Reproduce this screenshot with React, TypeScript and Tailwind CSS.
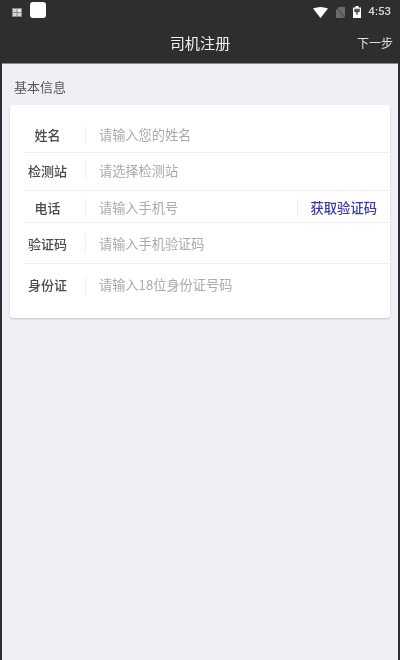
const font = "[font-family:'Noto_Sans_CJK_SC','Liberation_Sans',sans-serif]";

function Row({ label, hint, h, line = true, extra }: { label: string; hint: string; h: string; line?: boolean; extra?: boolean }) {
  return (
    <div className={`${h} flex items-center ml-[14px] ${line ? "border-b border-[#eeeeee]" : ""}`}>
      <div className="w-[47px] text-center text-[13px] font-medium text-[#4a4a4a]">{label}</div>
      <div className="ml-[14px] h-[17px] w-px bg-[#eeeeee]" />
      <div className="ml-[13px] flex-1 text-[13.2px] text-[#aaaaaa]">{hint}</div>
      {extra && (
        <div className="flex h-[17px] items-center border-l border-[#eeeeee] pl-[13px] pr-[13px] text-[13.3px] font-medium text-[#3a3aa6]">获取验证码</div>
      )}
    </div>
  );
}

export default function App() {
  return (
    <div className={`${font} flex h-[660px] w-[400px] flex-col bg-[#efeff4] border-l-2 border-r-2 border-[#2a2d33] blur-[0.5px]`}>
      <div className="flex h-[64px] flex-col bg-[#2e2e2e] border-b border-[#8a8a8a]">
        <div className="flex h-[24px] items-center text-white">
          <svg width="10" height="9" viewBox="0 0 10 9" className="ml-[10px]">
            <rect width="10" height="9" fill="#8c8c8c" />
            <rect x="1" y="1" width="3.5" height="3" fill="#d8d8d8" />
            <rect x="5.5" y="1" width="3.5" height="3" fill="#e8e8e8" />
            <rect x="1" y="5" width="3.5" height="3" fill="#d8d8d8" />
            <rect x="5.5" y="5" width="3.5" height="3" fill="#d8d8d8" />
          </svg>
          <div className="mb-[4px] ml-[8px] h-[16px] w-[16px] rounded-[3px] bg-white" />
          <div className="flex-1" />
          <svg width="15" height="11" viewBox="0 0 15 11" className="mr-[8px]">
            <path d="M0 1.5 Q7.5 -1.5 15 1.5 L7.5 11 Z" fill="#ffffff" />
          </svg>
          <svg width="9" height="11" viewBox="0 0 9 11" className="mr-[8px]">
            <path d="M3 0 H9 V11 H0 V3 Z" fill="#6a6a6a" />
            <path d="M1 1 L9 11" stroke="#3f3f3f" strokeWidth="1" />
          </svg>
          <svg width="8" height="12" viewBox="0 0 8 12" className="mr-[7px]">
            <path d="M2.5 0 H5.5 V1.5 H8 V12 H0 V1.5 H2.5 Z" fill="#ffffff" />
            <path d="M1.2 2.7 H6.8 V6 H1.2 Z" fill="#555555" />
            <path d="M4 4 L5.6 6.5 H4.6 V9 H3.4 V6.5 H2.4 Z" fill="#444444" />
          </svg>
          <span className="mr-[7px] text-[11.5px] font-medium text-[#d8d8d8] [font-family:'Roboto',sans-serif]">4:53</span>
        </div>
        <div className="relative flex flex-1 items-center justify-center pb-[2px]">
          <span className="text-[15.2px] text-[#f2f2f2]">司机注册</span>
          <span className="absolute right-[5px] text-[12px] text-[#e0e0e0]">下一步</span>
        </div>
      </div>
      <div className="px-[12px] pt-[14px] pb-[9px] text-[13px] leading-[18px] text-[#555555]">基本信息</div>
      <div className="mx-[8px] flex h-[213px] flex-col rounded-[3px] bg-white shadow-[0_1px_2px_rgba(0,0,0,0.18)]">
        <Row label="姓名" hint="请输入您的姓名" h="h-[48px] pt-[12px]" />
        <Row label="检测站" hint="请选择检测站" h="h-[38px] pb-[2px]" />
        <Row label="电话" hint="请输入手机号" h="h-[32px] pt-[2px]" extra />
        <Row label="验证码" hint="请输入手机验证码" h="h-[41px] pt-[1px]" />
        <Row label="身份证" hint="请输入18位身份证号码" h="h-[44px] pb-[2px]" line={false} />
      </div>
    </div>
  );
}
